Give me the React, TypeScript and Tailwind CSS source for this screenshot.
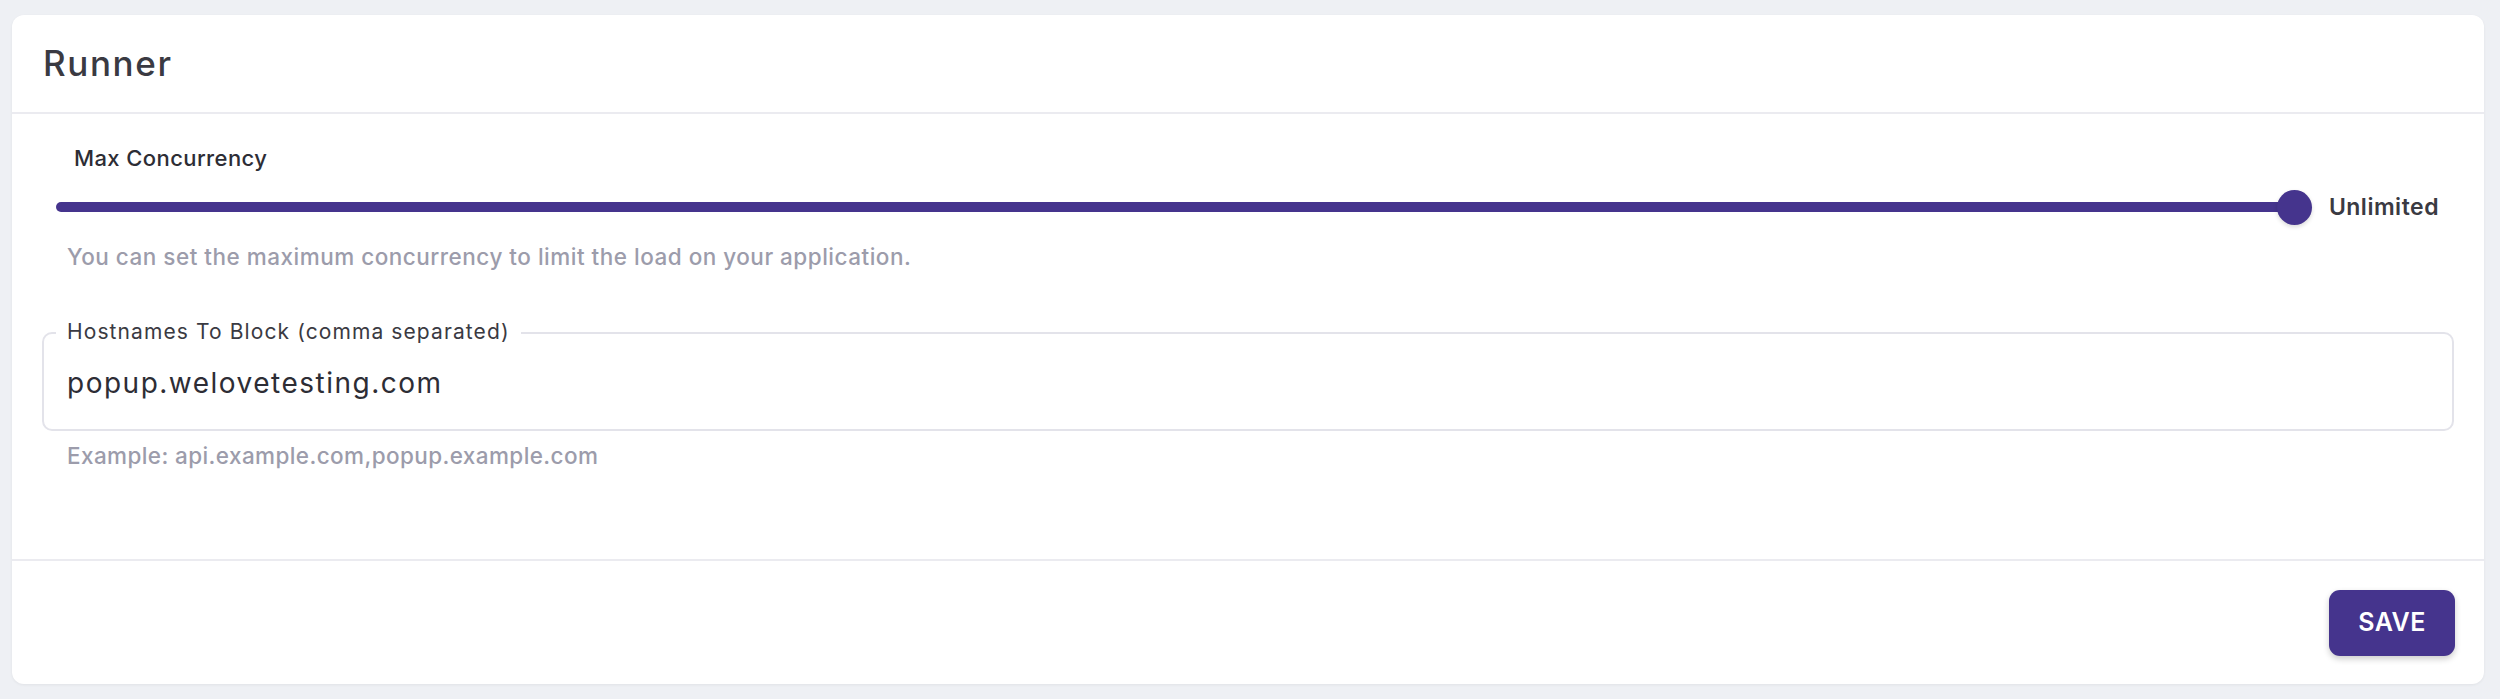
import React from "react";

export default function App() {
  return (
    <div className="min-h-screen bg-[#eef0f4] pl-[12px] pr-[16px] pt-[15px] pb-[15px] font-['Inter',sans-serif]">
      <div className="bg-white rounded-[12px] shadow-[0_1px_3px_rgba(0,0,0,0.06)] flex flex-col">
        <div className="h-[99px] flex items-center px-[31px] border-b-2 border-[#ebebf0]">
          <h1 className="text-[35px] font-medium text-[#3a3a42] tracking-[1.6px]">Runner</h1>
        </div>
        <div className="px-[30px] pt-[28px] h-[447px] border-b-2 border-[#ebebf0]">
          <div className="pl-[32px] text-[22px] leading-[33px] font-medium text-[#2d2d35] tracking-[0.4px]">Max Concurrency</div>
          <div className="mt-[14px] flex items-center h-[36px] pl-[14px] pr-[15px]">
            <div className="flex-1 h-[10px] rounded-full bg-[#45348d]" />
            <div className="w-[35px] h-[35px] rounded-full bg-[#45348d] -ml-[17px] shadow-[0_2px_4px_rgba(0,0,0,0.15)] shrink-0" />
            <span className="ml-[17px] text-[23px] font-semibold text-[#3a3a42] tracking-[0.5px]">Unlimited</span>
          </div>
          <div className="mt-[17px] pl-[25px] text-[22.5px] leading-[30px] font-medium text-[#9c9cab] tracking-[0.5px]">
            You can set the maximum concurrency to limit the load on your application.
          </div>
          <div className="relative mt-[60px] border-2 border-[#e3e3ea] rounded-[10px] h-[99px] pl-[23px] pr-[24px] flex items-center">
            <span className="absolute -top-[13px] left-[12px] px-[11px] bg-white text-[21px] leading-[22px] text-[#3a3a42] tracking-[1.1px]">
              Hostnames To Block (comma separated)
            </span>
            <div className="pt-[2px] text-[28px] leading-[36px] text-[#2d2d35] tracking-[1.5px]">popup.welovetesting.com</div>
          </div>
          <div className="mt-[10px] pl-[25px] text-[22.5px] leading-[30px] font-medium text-[#9c9cab] tracking-[0.4px]">
            Example: api.example.com,popup.example.com
          </div>
        </div>
        <div className="h-[123px] flex justify-end items-start pt-[29px] pr-[29px]">
          <button className="w-[126px] h-[66px] rounded-[11px] bg-[#45348d] text-white text-[25px] font-semibold tracking-[0.5px] shadow-[0_3px_6px_rgba(0,0,0,0.2)]">
            SAVE
          </button>
        </div>
      </div>
    </div>
  );
}
